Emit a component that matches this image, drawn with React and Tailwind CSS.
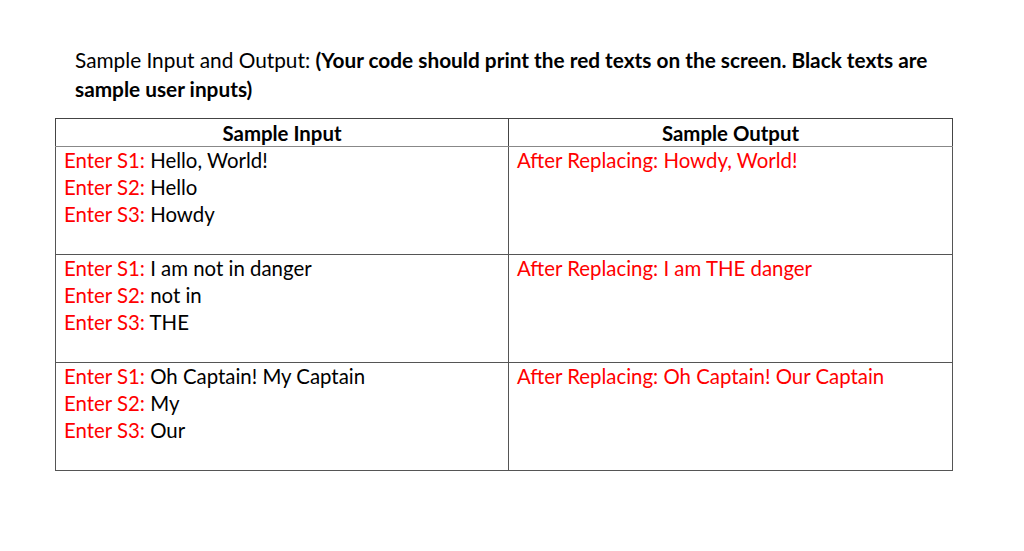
export default function App() {
  const rows = [
    { s1: 'Hello, World!', s2: 'Hello', s3: 'Howdy', out: 'Howdy, World!' },
    { s1: 'I am not in danger', s2: 'not in', s3: 'THE', out: 'I am THE danger' },
    { s1: 'Oh Captain! My Captain', s2: 'My', s3: 'Our', out: 'Oh Captain! Our Captain' },
  ]

  return (
    <div className="w-[1024px] h-[551px] bg-white text-black font-['Lato','Liberation_Sans',sans-serif] text-[20.4px]">
      <div className="pl-[75px] pt-[45px] leading-[29px] text-[20.8px]">
        <div>
          Sample Input and Output: <b>(Your code should print the red texts on the screen. Black texts are</b>
        </div>
        <div className="font-bold">sample user inputs)</div>
      </div>

      <table className="ml-[55px] mt-[15px] w-[898px] border-collapse">
        <thead>
          <tr className="h-[28px]">
            <th className="w-[453px] border border-[#444] border-b-[#888] font-bold text-center leading-[26px]">Sample Input</th>
            <th className="border border-[#444] border-b-[#888] font-bold text-center leading-[26px]">Sample Output</th>
          </tr>
        </thead>
        <tbody>
          {rows.map((r, i) => (
            <tr key={i} className="h-[108px]">
              <td className="border border-[#555] align-top pl-[8px] pt-0 leading-[27px]">
                <div><span className="text-[#ff0000]">Enter S1:</span> {r.s1}</div>
                <div><span className="text-[#ff0000]">Enter S2:</span> {r.s2}</div>
                <div><span className="text-[#ff0000]">Enter S3:</span> {r.s3}</div>
              </td>
              <td className="border border-[#555] align-top pl-[8px] pt-0 leading-[27px] text-[#ff0000]">
                After Replacing: {r.out}
              </td>
            </tr>
          ))}
        </tbody>
      </table>
    </div>
  )
}
